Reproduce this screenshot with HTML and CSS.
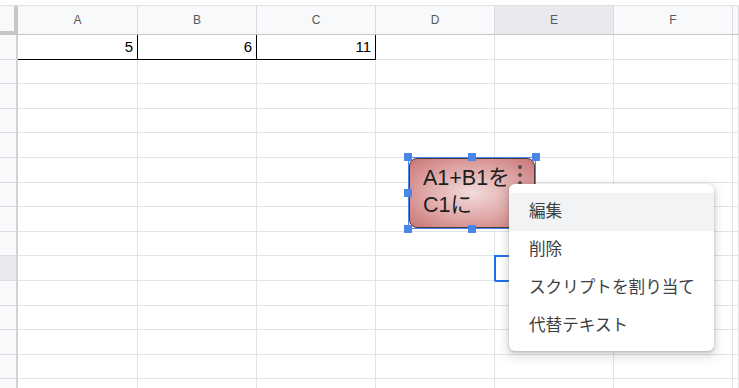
FILE: index.html
```html
<!DOCTYPE html>
<html lang="ja">
<head>
  <meta charset="utf-8">
  <title>シート</title>
  <link rel="stylesheet" href="styles.css">
</head>
<body>
  <div class="app">
    <div class="topbar"></div>

    <div class="sheet">
      <div class="corner"></div>
      <div class="colhead">A</div>
      <div class="colhead">B</div>
      <div class="colhead">C</div>
      <div class="colhead">D</div>
      <div class="colhead on">E</div>
      <div class="colhead">F</div>
      <div class="colhead"></div>

      <div class="rh"></div>
      <div class="cell num boxed">5</div>
      <div class="cell num boxed">6</div>
      <div class="cell num boxed">11</div>
      <div class="cell"></div><div class="cell"></div><div class="cell"></div><div class="cell"></div>

      <div class="rh"></div><div class="cell"></div><div class="cell"></div><div class="cell"></div><div class="cell"></div><div class="cell"></div><div class="cell"></div><div class="cell"></div>
      <div class="rh"></div><div class="cell"></div><div class="cell"></div><div class="cell"></div><div class="cell"></div><div class="cell"></div><div class="cell"></div><div class="cell"></div>
      <div class="rh"></div><div class="cell"></div><div class="cell"></div><div class="cell"></div><div class="cell"></div><div class="cell"></div><div class="cell"></div><div class="cell"></div>
      <div class="rh"></div><div class="cell"></div><div class="cell"></div><div class="cell"></div><div class="cell"></div><div class="cell"></div><div class="cell"></div><div class="cell"></div>
      <div class="rh"></div><div class="cell"></div><div class="cell"></div><div class="cell"></div><div class="cell"></div><div class="cell"></div><div class="cell"></div><div class="cell"></div>
      <div class="rh"></div><div class="cell"></div><div class="cell"></div><div class="cell"></div><div class="cell"></div><div class="cell"></div><div class="cell"></div><div class="cell"></div>
      <div class="rh"></div><div class="cell"></div><div class="cell"></div><div class="cell"></div><div class="cell"></div><div class="cell"></div><div class="cell"></div><div class="cell"></div>
      <div class="rh"></div><div class="cell"></div><div class="cell"></div><div class="cell"></div><div class="cell"></div><div class="cell"></div><div class="cell"></div><div class="cell"></div>
      <div class="rh on"></div><div class="cell"></div><div class="cell"></div><div class="cell"></div><div class="cell"></div><div class="cell sel"></div><div class="cell"></div><div class="cell"></div>
      <div class="rh"></div><div class="cell"></div><div class="cell"></div><div class="cell"></div><div class="cell"></div><div class="cell"></div><div class="cell"></div><div class="cell"></div>
      <div class="rh"></div><div class="cell"></div><div class="cell"></div><div class="cell"></div><div class="cell"></div><div class="cell"></div><div class="cell"></div><div class="cell"></div>
      <div class="rh"></div><div class="cell"></div><div class="cell"></div><div class="cell"></div><div class="cell"></div><div class="cell"></div><div class="cell"></div><div class="cell"></div>
      <div class="rh"></div><div class="cell"></div><div class="cell"></div><div class="cell"></div><div class="cell"></div><div class="cell"></div><div class="cell"></div><div class="cell"></div>
      <div class="rh"></div><div class="cell"></div><div class="cell"></div><div class="cell"></div><div class="cell"></div><div class="cell"></div><div class="cell"></div><div class="cell"></div>
    </div>

    <!-- drawing with its selection frame -->
    <div class="drawing">
      <div class="shape">
        <span class="shape-text">A1+B1を<br>C1に</span>
        <span class="kebab"><i></i><i></i><i></i></span>
      </div>
      <span class="handle h-tl"></span>
      <span class="handle h-tm"></span>
      <span class="handle h-tr"></span>
      <span class="handle h-ml"></span>
      <span class="handle h-mr"></span>
      <span class="handle h-bl"></span>
      <span class="handle h-bm"></span>
      <span class="handle h-br"></span>
    </div>

    <ul class="menu">
      <li class="hover">編集</li>
      <li>削除</li>
      <li>スクリプトを割り当て</li>
      <li>代替テキスト</li>
    </ul>
  </div>
</body>
</html>
```

FILE: styles.css
```css
body {
  margin: 0;
  padding: 0;
  background: #fff;
  font-family: "Liberation Sans", Arial, "Noto Sans CJK JP", sans-serif;
}

.app {
  position: relative;
  width: 739px;
  height: 388px;
  overflow: hidden;
}

.topbar {
  height: 5px;
  border-bottom: 1px solid #e1e3e1;
}

.sheet {
  display: grid;
  grid-template-columns: 18px 120px repeat(5, 119px) 1fr;
  grid-template-rows: 29px repeat(15, 24.6px);
}

.sheet > div {
  box-sizing: border-box;
}

.corner {
  background: #f8f9fa;
  border-right: 4px solid #c4c7c5;
  border-bottom: 4px solid #c4c7c5;
}

.colhead {
  background: #f8f9fa;
  border-right: 1px solid #dadce0;
  border-bottom: 1px solid #c4c7c5;
  color: #575a5c;
  font-size: 12px;
  display: flex;
  align-items: center;
  justify-content: center;
}

.colhead.on {
  background: #e8eaed;
}

.rh {
  background: #f8f9fa;
  border-right: 2px solid #d0d2d4;
  border-bottom: 1px solid #dadce0;
}

.rh.on {
  background: #e8eaed;
}

.cell {
  border-right: 1px solid #e2e3e3;
  border-bottom: 1px solid #e2e3e3;
  font-size: 15px;
  color: #000;
}

.cell.num {
  display: flex;
  align-items: center;
  justify-content: flex-end;
  padding-right: 4px;
}

.cell.boxed {
  border-right-color: #000;
  border-bottom-color: #000;
}

.cell.sel {
  outline: 2px solid #1a73e8;
  outline-offset: -1px;
}

/* drawing */
.drawing {
  position: absolute;
  left: 408px;
  top: 157px;
  width: 128px;
  height: 72px;
  box-sizing: border-box;
  border: 1px solid #4a86e8;
}

.shape {
  box-sizing: border-box;
  height: 100%;
  border: 1px solid #4a3c3c;
  border-radius: 8px;
  background: radial-gradient(ellipse at 50% 50%, #f2dcdc 0%, #dfa5a5 55%, #c77575 100%);
  padding: 6px 0 0 13px;
  position: relative;
}

.shape-text {
  display: block;
  font-size: 21.5px;
  line-height: 27px;
  color: #1e1e1e;
}

.kebab {
  position: absolute;
  top: 6px;
  right: 12px;
  display: flex;
  flex-direction: column;
  gap: 4px;
}

.kebab i {
  width: 4px;
  height: 4px;
  border-radius: 50%;
  background: #4f4f4f;
}

.handle {
  position: absolute;
  width: 8px;
  height: 8px;
  background: #4a86e8;
}

.h-tl { left: -5px; top: -5px; }
.h-tm { left: 59px; top: -5px; }
.h-tr { right: -5px; top: -5px; }
.h-ml { left: -5px; top: 31px; }
.h-mr { right: -5px; top: 31px; }
.h-bl { left: -5px; bottom: -5px; }
.h-bm { left: 59px; bottom: -5px; }
.h-br { right: -5px; bottom: -5px; }

/* context menu */
.menu {
  position: absolute;
  left: 509px;
  top: 184px;
  width: 205px;
  margin: 0;
  padding: 9px 0 6px;
  list-style: none;
  background: #fff;
  border-radius: 6px;
  box-shadow: 0 1px 3px rgba(60, 64, 67, 0.3), 0 4px 8px 3px rgba(60, 64, 67, 0.15);
  font-family: "Noto Sans CJK JP", sans-serif;
  font-size: 16.6px;
  color: #3c4043;
}

.menu li {
  height: 38px;
  line-height: 35px;
  padding-left: 20px;
  white-space: nowrap;
}

.menu li.hover {
  background: #f1f3f4;
}
```
